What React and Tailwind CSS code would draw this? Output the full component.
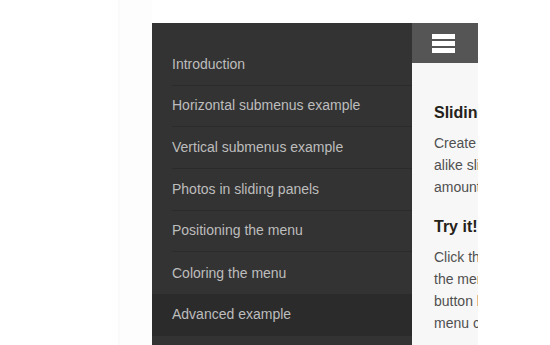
const menuItems = [
  'Introduction',
  'Horizontal submenus example',
  'Vertical submenus example',
  'Photos in sliding panels',
  'Positioning the menu',
  'Coloring the menu',
  'Advanced example',
  'Off-canvas menus',
];

function Hamburger() {
  return (
    <svg width="23" height="19" viewBox="0 0 23 19" className="block">
      <rect x="0" y="0" width="23" height="5" fill="#fff" />
      <rect x="0" y="7" width="23" height="5" fill="#fff" />
      <rect x="0" y="14" width="23" height="5" fill="#fff" />
    </svg>
  );
}

export default function App() {
  return (
    <div
      className="w-[550px] h-[345px] overflow-hidden bg-white flex"
      style={{ fontFamily: '"Liberation Sans", Arial, sans-serif' }}
    >
      {/* faint page edge */}
      <div className="w-[118px] shrink-0" />
      <div className="w-[2px] shrink-0 bg-[#fafafa]" />
      <div className="w-[32px] shrink-0 bg-[#fdfdfd]" />

      <div className="flex pt-[23px]">
        {/* Menu panel */}
        <nav className="w-[260px] h-[322px] bg-[#333333] pt-[21px] overflow-hidden">
          <ul>
            {menuItems.map((item, i) => (
              <li
                key={item}
                className={
                  i === 6
                    ? 'h-[41.67px] bg-[#2b2b2b] pl-5'
                    : 'h-[41.67px] pl-5'
                }
              >
                <div
                  className={
                    i < 5
                      ? 'h-full flex items-center border-b border-[#2b2b2b] text-[14px] text-[#bdbdbd]'
                      : 'h-full flex items-center text-[14px] text-[#bdbdbd]'
                  }
                >
                  {item}
                </div>
              </li>
            ))}
          </ul>
        </nav>

        {/* Page content */}
        <main className="w-[66px] h-[322px] bg-[#f7f7f7] overflow-hidden">
          <header className="h-[40px] bg-[#555555] flex items-center pl-[20px]">
            <Hamburger />
          </header>
          <div className="pl-[22px] pt-[39px] whitespace-nowrap">
            <h2 className="text-[16px] font-bold text-[#24221a] leading-[22px]">
              Sliding submenus
            </h2>
            <div className="mt-[8px] text-[14px] leading-[22px] text-[#505050]">
              <p>Create a mobile app look-</p>
              <p>alike sliding menu with any</p>
              <p>amount of submenus.</p>
            </div>
            <h2 className="mt-[18px] text-[16px] font-bold text-[#24221a] leading-[22px]">
              Try it!
            </h2>
            <div className="mt-[8px] text-[14px] leading-[22px] text-[#505050]">
              <p>Click the menu icon to open</p>
              <p>the menu, or use the</p>
              <p>button below to close the</p>
              <p>menu completely.</p>
            </div>
          </div>
        </main>
      </div>
    </div>
  );
}
